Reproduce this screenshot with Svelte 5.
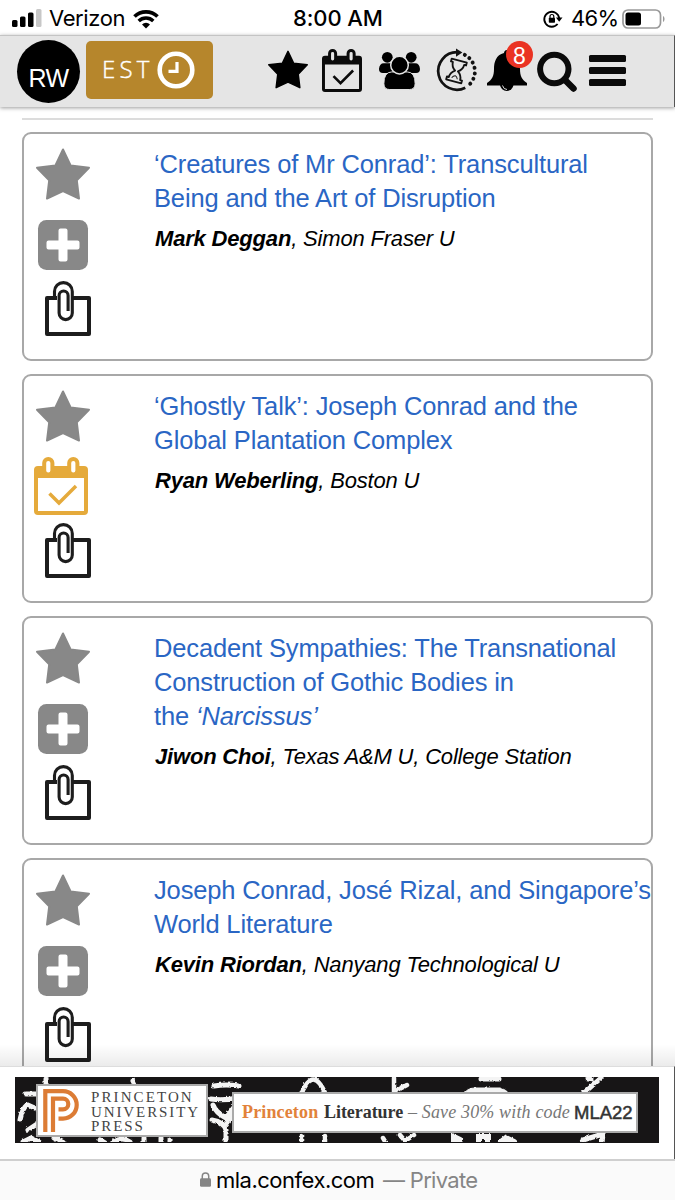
<script>
  const talks = [
    { lines: ['‘Creatures of Mr Conrad’: Transcultural', 'Being and the Art of Disruption'], who: 'Mark Deggan', where: 'Simon Fraser U' },
    { lines: ['‘Ghostly Talk’: Joseph Conrad and the', 'Global Plantation Complex'], who: 'Ryan Weberling', where: 'Boston U', scheduled: true },
    { lines: ['Decadent Sympathies: The Transnational', 'Construction of Gothic Bodies in', 'the'], em: '‘Narcissus’', who: 'Jiwon Choi', where: 'Texas A&M U, College Station' },
    { lines: ['Joseph Conrad, José Rizal, and Singapore’s', 'World Literature'], who: 'Kevin Riordan', where: 'Nanyang Technological U' }
  ];
</script>

{#snippet star(cls, color)}
  <svg class={cls} viewBox="0 0 54 52" fill={color} stroke={color} stroke-width="2" stroke-linejoin="round">
    <path d="M27 1.5 34.7 17.6 53 19.7 40.8 32.3 43 50.5 27 43 11 50.5 13.2 32.3 1 19.7 19.3 17.6Z" />
  </svg>
{/snippet}

{#snippet calendar(cls, color, hole)}
  <svg class={cls} viewBox="0 0 54 58" fill="none">
    <rect x="2" y="11" width="50" height="45" rx="2" fill={hole} stroke={color} stroke-width="4" />
    <path d="M2 11h50v10H2z" fill={color} />
    <rect x="10.2" y="2" width="8.2" height="15.5" rx="4" fill={hole} stroke={color} stroke-width="4" />
    <rect x="35.2" y="2" width="8.2" height="15.5" rx="4" fill={hole} stroke={color} stroke-width="4" />
    <path d="M15.5 36.500l9.500 9.500 17-17" stroke={color} stroke-width="3.500" />
  </svg>
{/snippet}

<div class="screen">
  <div class="status">
    <svg class="signal" viewBox="0 0 30 20">
      <rect x="0" y="11" width="5.500" height="7" rx="1.500" />
      <rect x="8" y="7.500" width="5.500" height="10.500" rx="1.500" />
      <rect x="16" y="3.500" width="5.500" height="14.500" rx="1.500" />
      <rect x="24" y="0" width="5.500" height="18" rx="1.500" fill="#c7c7c7" />
    </svg>
    <span class="carrier">Verizon</span>
    <svg class="wifi" viewBox="0 0 26 18" fill="none" stroke="#000">
      <path d="M1.500 6.500a16.500 16.500 0 0 1 23 0" stroke-width="3.700" />
      <path d="M5.700 11a10.400 10.400 0 0 1 14.600 0" stroke-width="3.400" />
      <path d="M13 18.500 9 14.400a5.700 5.700 0 0 1 8 0Z" fill="#000" stroke="none" />
    </svg>
    <span class="time">8:00 AM</span>
    <svg class="lock-rot" viewBox="0 0 20 18" fill="none" stroke="#000" stroke-width="1.800">
      <path d="M14.600 14a7.500 7.500 0 1 1 1.600-5.800" />
      <path d="M12.900 7.400h6.600l-3.300 4.300z" fill="#000" stroke="none" />
      <rect x="5.800" y="7.700" width="6.200" height="5.100" rx=".8" fill="#000" stroke="none" />
      <path d="M7 8V6.400a1.900 1.900 0 0 1 3.800 0V8" stroke-width="1.200" />
    </svg>
    <span class="pct">46%</span>
    <svg class="battery" viewBox="0 0 44 20">
      <rect x="1" y="1" width="37.500" height="18" rx="5" fill="none" stroke="#999" stroke-width="1.700" />
      <rect x="3.500" y="3.500" width="15.500" height="13" rx="2.500" />
      <path d="M41 7v6c2-1 2-5 0-6" fill="#999" />
    </svg>
  </div>

  <header>
    <div class="avatar">RW</div>
    <div class="tz">
      <span>EST</span>
      <svg viewBox="0 0 38 38" fill="none" stroke="#fff">
        <circle cx="19" cy="19" r="16.300" stroke-width="4.600" />
        <path d="M20 11v9.300h-8.500" stroke-width="3.200" />
      </svg>
    </div>
    <nav>
      {@render star('n-star', '#000')}
      {@render calendar('n-cal', '#0b0b0b', '#e5e5e5')}
      <svg class="n-people" viewBox="0 0 42 39">
        <circle cx="8.500" cy="6" r="5.500" /><circle cx="33" cy="6" r="5.500" />
        <path d="M0 18q.5-6 5-6h9v10H4q-4 0-4-4M42 18q-.5-6-5-6h-9v10h10q4 0 4-4" />
        <path d="M5 33q0-12 8-12h16q8 0 8 12 0 6-6 6H11q-6 0-6-6" stroke="#e5e5e5" stroke-width="1" />
        <circle cx="21" cy="14" r="9" stroke="#e5e5e5" stroke-width="1.500" />
      </svg>
      <svg class="n-hour" viewBox="0 0 42 42" fill="none" stroke="#111">
        <path d="M22 2.800A19.200 19.200 0 1 0 30 39.200" stroke-width="2.800" />
        <path d="M29.500 5.500A19 19 0 0 1 33 37" stroke-width="4" stroke-linecap="round" stroke-dasharray="0.100 5.600" />
        <path d="M20.500-1 27 3l-6.500 4.500Z" fill="#111" stroke="none" />
        <g transform="rotate(15 21 22)" stroke-width="1.900" stroke-linejoin="round">
          <path d="M13 11h16v3h-2q0 5-4.500 8 4.500 3 4.500 8h2v3H13v-3h2q0-5 4.500-8-4.500-3-4.500-8h-2z" />
          <path d="M18 30q1-2.500 3-3 2 .5 3 3" stroke-width="1" />
        </g>
      </svg>
      <div class="bell">
        <svg viewBox="0 0 40 42">
          <path d="M20 0c2 0 3 1.500 3 3 8 2 10 9 10 16 0 7 2 11 7 14v2.500H0V33c5-3 7-7 7-14C7 12 9 5 17 3c0-1.500 1-3 3-3" />
          <path d="M13 35a6.800 6.800 0 0 0 13.500 0z" />
          <path d="M15.500 35.500q1 4 4.500 4" fill="none" stroke="#ddd" stroke-width="1" />
        </svg>
        <span class="badge">8</span>
      </div>
      <svg class="n-search" viewBox="0 0 41 41" fill="none" stroke="#0a0a0a">
        <circle cx="17.300" cy="17" r="14.200" stroke-width="6" />
        <path d="m27.500 27.500 9 9" stroke-width="6.500" stroke-linecap="round" />
      </svg>
      <div class="burger"><i></i><i></i><i></i></div>
    </nav>
  </header>

  <main>
    <hr />
    {#each talks as t}
      <article>
        <div class="actions">
          {@render star('a-star', '#888')}
          {#if t.scheduled}
            {@render calendar('a-cal', '#e5aa3b', '#fff')}
          {:else}
            <svg class="a-plus" viewBox="0 0 50 50">
              <rect width="50" height="50" rx="8.500" fill="#888" />
              <path d="M22.500 8.500h5q2 0 2 2v10h10q2 0 2 2v5q0 2-2 2h-10v10q0 2-2 2h-5q-2 0-2-2v-10h-10q-2 0-2-2v-5q0-2 2-2h10v-10q0-2 2-2" fill="#fff" />
            </svg>
          {/if}
          <svg class="a-clip" viewBox="0 0 46 55" fill="none" stroke="#1d1d1d" stroke-width="4" stroke-linejoin="round">
            <path d="M12 17H2v36h42V17H28" />
            <path d="M9.500 18v-7.500a8.900 8.900 0 0 1 17.800 0V32a6.600 6.600 0 0 1-13.200 0V14.500a4.500 4.500 0 0 1 9 0V30" stroke-width="3.100" />
          </svg>
        </div>
        <div class="text">
          <h2>{#each t.lines as l, i}{#if i}<br />{/if}{l}{/each}{#if t.em}&nbsp;<em>{t.em}</em>{/if}</h2>
          <p><b>{t.who}</b>, {t.where}</p>
        </div>
      </article>
    {/each}
    <div class="fade"></div>
  </main>

  <div class="ad">
    <div class="banner">
      <svg class="art" viewBox="0 0 644 65" fill="none" stroke="#f4f4f4" stroke-width="5" stroke-linecap="round">
        <filter id="rough" filterUnits="userSpaceOnUse" x="0" y="0" width="644" height="65"><feTurbulence baseFrequency=".3" numOctaves="1" /><feDisplacementMap in="SourceGraphic" scale="2.500" xChannelSelector="R" yChannelSelector="G" /></filter>
        <g filter="url(#rough)">
          <path d="M10 16h12M4 42q3-14 8-15l9 4M12 52l9-6M7 64l8-4 8 4M30 1v5M38 60l10 5M117 3l2 4M84 62l5 3M98 64q8-6 16 0M128 64v-4M145 60v5M154 62v3" />
          <path d="M198 8q12-2 25 0M195 21q12 2 27-1M197 27q3 8 13 13l9-12M196 42q12 2 14 10v13M217 37l-7 10" />
          <path d="M285 17q12-31 25 0M286 58v7M309 58v7M378 0v14l13-7M367 60l3 5M384 57l5 6 9-6" stroke-width="4.500" />
          <path d="M465 1h18M568 15l17-15M572 1h3M567 62l20-6-1 9" />
          <path d="M448 16q3-6 11-6h25q7 2 9 6z" fill="#f4f4f4" stroke-width="1" />
          <path d="M438 65v-6l6 3M463 65v-6h9v5M485 64l5-4 8 4" stroke-width="6" />
        </g>
      </svg>
      <div class="press">
        <svg viewBox="0 0 38 43" fill="none" stroke="#dc7c35" stroke-width="4.200">
          <path d="M2.300 43V2.200H20a13.700 13.700 0 0 1 0 27.400H15.500" />
          <path d="M10 43V9.700h10a5.200 5.200 0 0 1 0 10.600h-4.500" />
        </svg>
        <div class="pname"><span>PRINCETON</span><span>UNIVERSITY</span><span>PRESS</span></div>
      </div>
      <div class="offer">
        <span class="o1">Princeton</span><span class="o2">Literature</span><span class="o3">– Save 30% with code</span><span class="o4">MLA22</span>
      </div>
    </div>
  </div>

  <footer>
    <svg viewBox="0 0 12 17">
      <rect y="7" width="12" height="9.500" rx="1.500" fill="#858585" />
      <path d="M2.500 8V4.800a3.500 3.500 0 0 1 7 0V8" fill="none" stroke="#858585" stroke-width="1.600" />
    </svg>
    <span class="host">mla.confex.com</span><span class="priv">— Private</span>
  </footer>
</div>

<style>
  :global(body) { background: #fff; overflow: hidden; }
  .screen { width: 675px; height: 1200px; display: flex; flex-direction: column; overflow: hidden; background: #fff; font-family: 'Liberation Sans', Arial, sans-serif; color: #000; }
  svg { display: block; flex: none; overflow: visible; }
  span { white-space: nowrap; }

  .status { height: 35px; flex: none; display: flex; align-items: center; font: 22px/35px Inter, sans-serif; letter-spacing: -.4px; padding-top: 2px; box-sizing: border-box; }
  .signal { width: 30px; height: 20px; margin-left: 12px; margin-top: 1px; }
  .carrier { width: 76px; margin-left: 7px; letter-spacing: -.4px; }
  .wifi { width: 26px; height: 18px; margin-left: 8px; }
  .time { width: 90px; margin-left: 134px; font-weight: 500; letter-spacing: -.1px; }
  .lock-rot { width: 20px; height: 18px; margin-left: 160px; }
  .pct { width: 46px; margin-left: 8px; letter-spacing: -.7px; }
  .battery { width: 44px; height: 20px; margin-left: 5px; }

  header { height: 72px; flex: none; box-sizing: border-box; border-top: 1px solid #c4c4c4; border-right: 1px solid #555; background: #e5e5e5; box-shadow: 0 1px 4px rgba(0,0,0,.4); display: flex; align-items: flex-start; padding: 4px 0 0 17px; z-index: 2; }
  .avatar { width: 63px; height: 63px; border-radius: 50%; background: #000; color: #fff; display: flex; align-items: center; justify-content: center; font-size: 25px; letter-spacing: -.5px; padding-top: 13px; box-sizing: border-box; }
  .tz { width: 127px; height: 58px; margin: 1px 0 0 6px; border-radius: 5px; background: #b6862c; color: #fff; display: flex; align-items: center; box-sizing: border-box; padding-left: 16px; font: 300 24px 'Open Sans', sans-serif; letter-spacing: 4.200px; -webkit-text-stroke: .4px #fff; }
  .tz span { width: 55px; margin-top: -4px; }
  .tz svg { width: 38px; height: 38px; }
  nav { display: flex; align-items: flex-start; margin-left: 55px; padding-top: 9px; }
  :global(.n-star) { width: 40px; height: 39px; margin-top: 1px; }
  :global(.n-cal) { width: 40px; height: 43px; margin-left: 14px; }
  .n-people { width: 41px; height: 39px; margin: 2px 0 0 17px; }
  .n-hour { width: 41px; height: 42px; margin: 0 0 0 16px; }
  .bell { position: relative; width: 40px; height: 42px; margin: 1px 0 0 10px; }
  .bell svg { width: 40px; height: 42px; }
  .badge { position: absolute; left: 19px; top: -9px; width: 27px; height: 27px; border-radius: 50%; background: #ea3323; color: #fff; font: 23px/30px 'Liberation Sans', sans-serif; text-align: center; }
  .n-search { width: 41px; height: 41px; margin: 3px 0 0 10px; }
  .burger { display: flex; flex-direction: column; gap: 5.500px; margin: 6px 0 0 11px; }
  .burger i { width: 37px; height: 6.700px; border-radius: 1.500px; background: #0a0a0a; }

  main { position: relative; height: 959px; flex: none; overflow: hidden; box-sizing: border-box; padding: 11px 22px 0; }
  hr { border: 0; height: 2px; background: #dcdcdc; margin: 0 0 12px; }
  article { width: 631px; height: 229px; box-sizing: border-box; border: 2px solid #a8a8a8; border-radius: 9px; margin-bottom: 13px; display: flex; }
  .actions { width: 130px; flex: none; display: flex; flex-direction: column; padding: 14px 0 0 9px; box-sizing: border-box; }
  :global(.a-star) { width: 54px; height: 52px; margin-left: 3px; }
  .a-plus { width: 50px; height: 50px; margin: 20px 0 11px 5px; }
  :global(.a-cal) { width: 54px; height: 58px; margin: 15px 0 8px 1px; }
  .a-clip { width: 46px; height: 55px; margin-left: 12px; }
  .text { white-space: nowrap; padding-top: 13px; }
  h2 { margin: 0; font-size: 25.500px; letter-spacing: -.14px; line-height: 34px; font-weight: 400; color: #2a66c4; }
  p { margin: 7px 0 0 1px; font-size: 22px; letter-spacing: -.18px; line-height: 34px; font-style: italic; }
  .fade { position: absolute; left: 0; right: 0; bottom: 0; height: 22px; background: linear-gradient(rgba(0,0,0,0), rgba(0,0,0,.08)); }

  .ad { height: 93px; flex: none; box-sizing: border-box; border-top: 1px solid #ddd; padding: 10px 15px; border-right: 1px solid #555; }
  .banner { position: relative; width: 644px; height: 66px; background: #171516; display: flex; align-items: flex-start; overflow: hidden; }
  .art { position: absolute; inset: 0; width: 644px; height: 65px; }
  .press { position: relative; margin: 7px 0 0 21px; width: 172px; height: 53px; box-sizing: border-box; background: #fff; border: 2px solid #aaa; display: flex; padding: 3px 0 0 5px; }
  .press svg { width: 38px; height: 43px; }
  .pname { display: flex; flex-direction: column; margin: 1px 0 0 10px; font: 15px/14.500px 'Liberation Serif', serif; letter-spacing: 1.900px; color: #444; }
  .pname span:first-child { letter-spacing: 2.100px; }
  .offer { position: relative; margin: 15px 0 0 24px; width: 406px; height: 41px; box-sizing: border-box; border: 2px solid #aaa; background: #fff; display: flex; align-items: center; padding-left: 8px; font: 18px 'Liberation Serif', serif; }
  .o1 { width: 82px; color: #e2823a; font-weight: 700; letter-spacing: .15px; }
  .o2 { width: 84px; color: #333; font-weight: 700; letter-spacing: -.05px; }
  .o3 { width: 166px; color: #777; font-style: italic; letter-spacing: .15px; }
  .o4 { color: #333; font: 18.500px 'Liberation Sans', sans-serif; -webkit-text-stroke: .5px #333; }

  footer { flex: 1; border-top: 2px solid #cfcfcf; background: #fafafa; display: flex; align-items: center; font: 22px Inter, sans-serif; letter-spacing: -.5px; padding: 0 0 2px 200px; }
  footer svg { width: 11px; height: 17px; }
  .host { width: 160px; margin-left: 5px; }
  .priv { margin-left: 7px; color: #858585; letter-spacing: -.7px; }
</style>
